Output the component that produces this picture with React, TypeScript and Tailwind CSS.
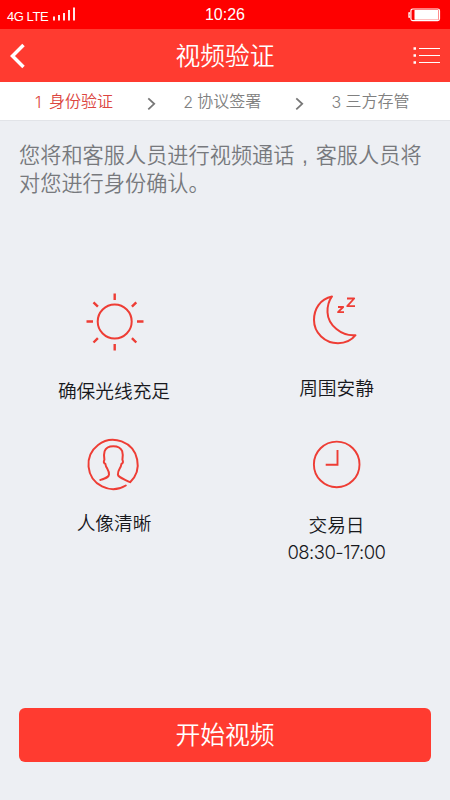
import React from 'react';

const steps = [
  { number: 1, name: '身份验证' },
  { number: 2, name: '协议签署' },
  { number: 3, name: '三方存管' },
];

function SignalIcon() {
  return (
    <svg width="24" height="15" viewBox="0 0 24 15" stroke="#fff" strokeOpacity="0.9" strokeWidth="2">
      <path d="M2 9.500v4M7 8v5.500M12 6v7.500M17 3v10.500M22 .5v13" />
    </svg>
  );
}

function BatteryIcon() {
  return (
    <svg width="33" height="14" viewBox="0 0 33 14" fill="none">
      <path d="M2 5H1v4h1" stroke="#fff" strokeWidth="1.3" />
      <rect x="2.9" y="1" width="28.6" height="11.6" rx="1.8" stroke="#fff" strokeWidth="1.2" />
      <rect x="6.5" y="2" width="24" height="9.7" rx="0.5" fill="#fff" />
    </svg>
  );
}

function StepArrow() {
  return (
    <svg width="10" height="14" viewBox="0 0 10 14" fill="none" stroke="#777" strokeWidth="1.8">
      <path d="M1.300 2.300 7.200 7.800l-5.900 5.500" />
    </svg>
  );
}

function SunIcon() {
  return (
    <svg width="60" height="60" viewBox="0 0 60 60" fill="none" stroke="#ee3d35" strokeWidth="2">
      <circle cx="30.7" cy="29.5" r="17" />
      <path
        strokeWidth="2.4"
        d="M30.7 1.500v6.500M30.700 52v6.500M2.500 29.500H9M53 29.500h6.500M9.500 10.300l4.400 4.400M52.300 10.300l-4.400 4.400M9.500 50.500l4.400-4.400M52.300 50.500l-4.400-4.400"
      />
    </svg>
  );
}

function MoonIcon() {
  return (
    <svg width="60" height="60" viewBox="0 0 60 60" fill="none" stroke="#ee3d35" strokeWidth="2">
      <path
        strokeLinejoin="round"
        d="M25 4.500C13 7 7 17 7 28c0 13 11 23.200 24 23.200 8 0 14-3.500 17.500-8-14 1.200-27.500-10-28-23-.2-6 1-11 4.500-15.700Z"
      />
      <path strokeWidth="1.8" strokeLinejoin="round" d="M31 15h5.200l-5.200 5.200h6M40 6.500h7.200l-7 7.700H48" />
    </svg>
  );
}

function PersonIcon() {
  return (
    <svg width="60" height="60" viewBox="0 0 60 60" fill="none" stroke="#ee3d35" strokeWidth="2" strokeLinecap="round">
      <path
        strokeLinejoin="round"
        d="M16.300 46c5.700-1.900 8.500-2.800 8.700-5.300.1-2-.3-3.700-1.700-6-1.200-1.600-1.700-3-1.900-4.700-1.700-.6-2-2.500-1-4.200-.5-3.300-.5-6.500.2-8.600C21.800 13.700 24.500 12.200 29.300 12.200s7.500 1.500 8.900 5c.7 2.100.7 5.300.2 8.600 1 1.700.7 3.600-1 4.200-.2 1.700-.7 3.100-1.800 4.700-1.500 2.300-1.800 4-1.700 6 .2 2.500 4 3.600 12.200 7.500A24.600 24.600 0 1 0 41.800 51.500"
      />
    </svg>
  );
}

function ClockIcon() {
  return (
    <svg width="60" height="60" viewBox="0 0 60 60" fill="none" stroke="#ee3d35" strokeWidth="1.9">
      <circle cx="29.7" cy="30.400" r="22.800" />
      <path d="M30.500 16v14.800H18.700" />
    </svg>
  );
}

export default function App() {
  return (
    <div className="flex h-[800px] w-[450px] flex-col overflow-hidden bg-[#edeff3] font-['Liberation_Sans','Noto_Sans_CJK_SC',sans-serif] font-[350]">
      {/* Status bar */}
      <div className="grid h-[29px] shrink-0 grid-cols-3 items-center bg-[#fe0000] text-white">
        <div className="flex items-center gap-1 pl-[7px]">
          <span className="pt-[3px] text-[13px] leading-none tracking-[-0.45px]">4G LTE</span>
          <SignalIcon />
        </div>
        <span className="pt-px text-center text-base leading-none">10:26</span>
        <div className="flex justify-end pr-[9px]">
          <BatteryIcon />
        </div>
      </div>

      {/* Title bar */}
      <header className="grid h-[53px] shrink-0 grid-cols-[1fr_auto_1fr] items-center bg-[#ff3b30] text-white">
        <button aria-label="返回" className="pl-[9px]">
          <svg width="18" height="26" viewBox="0 0 18 26" fill="none" stroke="#fff" strokeWidth="3.500">
            <path d="M14.500 2 3.500 13l11 11" />
          </svg>
        </button>
        <h1 className="pt-0.5 text-[24.800px] leading-8">视频验证</h1>
        <button aria-label="菜单" className="flex justify-end pr-[10px]">
          <svg width="28" height="20" viewBox="0 0 28 20" fill="none" stroke="#fff">
            <path strokeWidth="1.200" d="M7 2.500h21M7 9.500h21M7 16.500h21" />
            <path strokeWidth="2.500" d="M1.500 2.500H4M1.500 9.500H4M1.500 16.500H4" />
          </svg>
        </button>
      </header>

      {/* Steps */}
      <nav className="flex h-[39px] shrink-0 items-center border-b border-[#e2e4e8] bg-white pl-[35px] text-base text-[#808080]">
        {steps.map((step, index) => (
          <React.Fragment key={step.number}>
            <span className={`flex w-[112px] gap-[5px] pt-0.5 ${index === 0 ? 'text-[#dc4540]' : ''}`}>
              <span className="w-[9px] font-['Inter','Liberation_Sans',sans-serif] font-light">{step.number}</span>
              {step.name}
            </span>
            {index < steps.length - 1 && (
              <div className="w-[36.300px] pt-1">
                <StepArrow />
              </div>
            )}
          </React.Fragment>
        ))}
      </nav>

      <main className="flex grow flex-col">
        <p className="h-[164px] whitespace-nowrap pl-[19px] pt-[21px] text-[21.200px] leading-[27.500px] text-[#77797d]">
          您将和客服人员进行视频通话
          {/* narrow comma centred in a full-width cell */}
          <span className="inline-block w-[21.200px] text-center">,</span>
          客服人员将
          <br />
          对您进行身份确认。
        </p>

        <div className="grid grid-cols-[222px_222px] pl-[3px] text-center text-[18.700px] leading-[27px] text-[#17181c]">
          <div className="flex h-[149px] flex-col items-center pt-[7px]">
            <SunIcon />
            <span className="mt-[26px]">确保光线充足</span>
          </div>
          <div className="flex h-[149px] flex-col items-center pl-px pt-[7px]">
            <MoonIcon />
            <span className="mt-[23px]">周围安静</span>
          </div>
          <div className="flex flex-col items-center">
            <PersonIcon />
            <span className="mt-4">人像清晰</span>
          </div>
          <div className="flex flex-col items-center pl-px">
            <ClockIcon />
            <span className="mt-[18px]">交易日</span>
            <span className="font-['Inter','Liberation_Sans',sans-serif] text-[18.500px] font-light tracking-[-0.55px]">08:30-17:00</span>
          </div>
        </div>
      </main>

      <button className="mx-[19px] mb-[38px] h-[54px] shrink-0 rounded-md bg-[#ff3b30] pt-0.5 text-[24.800px] text-white">
        开始视频
      </button>
    </div>
  );
}
